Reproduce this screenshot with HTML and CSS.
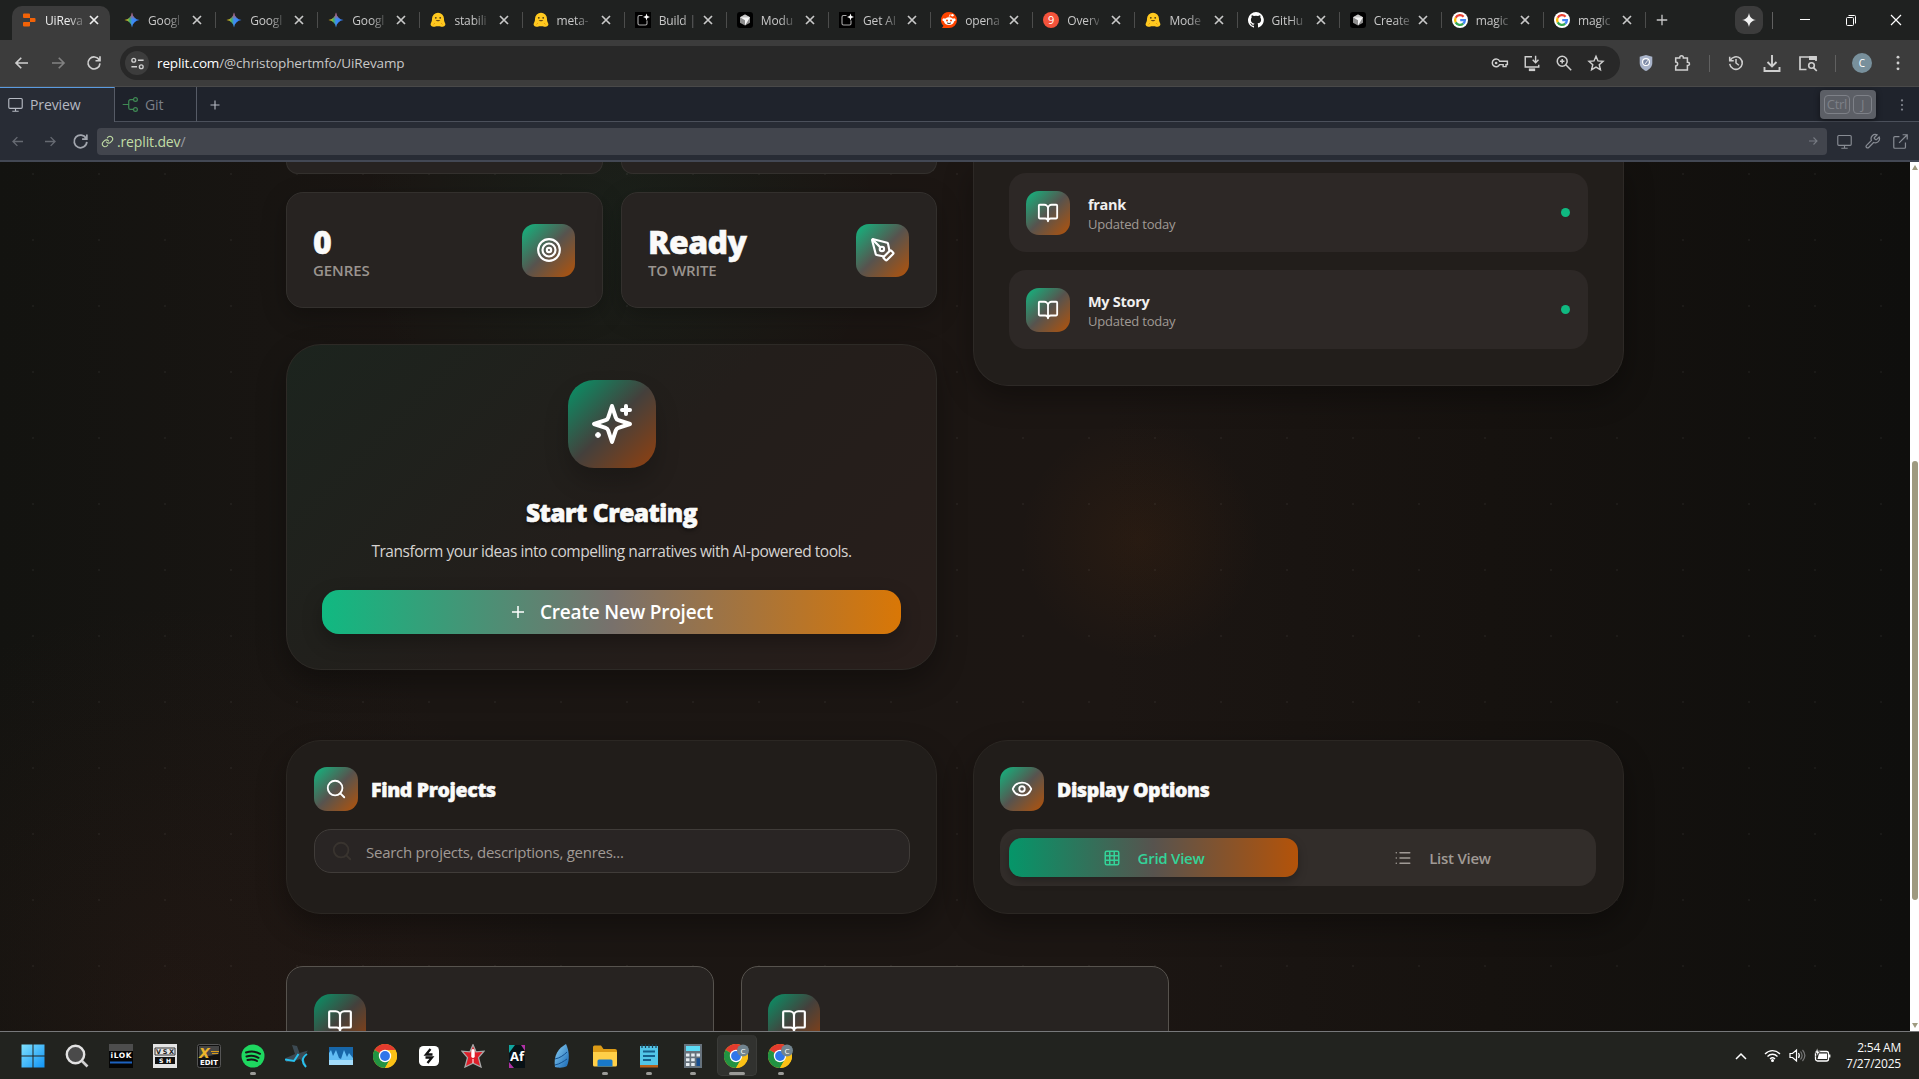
FILE: index.html
```html
<!DOCTYPE html>
<html lang="en">
<head>
<meta charset="utf-8">
<title>UiRevamp - Replit</title>
<link rel="stylesheet" href="styles.css">
</head>
<body>
<svg class="defs" width="0" height="0" aria-hidden="true">
  <defs>
    <linearGradient id="gGem" x1="0" y1="0" x2="1" y2="0"><stop offset="0.1" stop-color="#f6c515"/><stop offset="0.35" stop-color="#3fae6b"/><stop offset="0.5" stop-color="#3f8cf5"/><stop offset="1" stop-color="#2f7bf6"/></linearGradient>
    <linearGradient id="gGemTop" x1="0" y1="0" x2="0" y2="1"><stop offset="0" stop-color="#f04438"/><stop offset="0.45" stop-color="#f04438" stop-opacity="0"/></linearGradient>
    <linearGradient id="gWin" x1="0" y1="0" x2="1" y2="1"><stop offset="0" stop-color="#7fe0fd"/><stop offset="1" stop-color="#1093f5"/></linearGradient>
    <linearGradient id="gFeather" x1="0" y1="0" x2="1" y2="1"><stop offset="0" stop-color="#8fd4f5"/><stop offset="1" stop-color="#1767b5"/></linearGradient>
    <symbol id="close" viewBox="0 0 12 12"><path d="M2 2l8 8M10 2l-8 8" fill="none" stroke="currentColor" stroke-width="1.7"/></symbol>
    <symbol id="fReplit" viewBox="0 0 16 16"><path fill="#f26207" d="M3 1.500h5a1 1 0 0 1 1 1V6H3a1 1 0 0 1-1-1V2.500a1 1 0 0 1 1-1zM9 6h4.500a1 1 0 0 1 1 1v2a1 1 0 0 1-1 1H9zM3 10h6v3.500a1 1 0 0 1-1 1H3a1 1 0 0 1-1-1V11a1 1 0 0 1 1-1z"/></symbol>
    <symbol id="fGem" viewBox="0 0 16 16"><path fill="url(#gGem)" d="M8 .5C8.700 4.800 11.200 7.300 15.500 8 11.200 8.700 8.700 11.200 8 15.500 7.300 11.200 4.800 8.700.5 8 4.800 7.300 7.300 4.800 8 .5z"/><path fill="url(#gGemTop)" d="M8 .5C8.700 4.800 11.200 7.300 15.500 8 11.200 8.700 8.700 11.200 8 15.500 7.300 11.200 4.800 8.700.5 8 4.800 7.300 7.300 4.800 8 .5z"/></symbol>
    <symbol id="fHug" viewBox="0 0 16 16"><path fill="#ffc91f" d="M8 .8a6 6 0 0 1 6 6c0 2 .2 2.600 1.200 4.600.8 1.800-1 3.600-4 3.300-1.500-.5-4.900-.5-6.400 0-3 .3-4.800-1.500-4-3.300C1.800 9.400 2 8.800 2 6.800a6 6 0 0 1 6-6z"/><circle cx="5.800" cy="5.800" r=".9" fill="#4a3b16"/><circle cx="10.200" cy="5.800" r=".9" fill="#4a3b16"/><path d="M5.700 8c1.200 1.800 3.400 1.800 4.600 0z" fill="#6b4a13"/><path d="M3.500 12.500l1.500-1.500M12.500 12.500L11 11" stroke="#e99a14"/></symbol>
    <symbol id="fBuild" viewBox="0 0 16 16"><path d="M0 0h16v16H0z" fill="#000"/><path d="M7.500 3.500H4.500a1.500 1.500 0 0 0-1.500 1.500v6.500A1.500 1.500 0 0 0 4.500 13h6a1.500 1.500 0 0 0 1.500-1.500V8.500" fill="none" stroke="#aaa" stroke-width="1.100"/><path d="M11.500 1.500l.9 2.600 2.600.9-2.600.9-.9 2.600-.9-2.600L8 5l2.600-.9z" fill="#fff"/></symbol>
    <symbol id="fCube" viewBox="0 0 16 16"><rect width="16" height="16" rx="3" fill="#000"/><path d="M8 2.500l5 2.800v5.400l-5 2.800-5-2.800V5.300z" fill="#8d8d8d"/><path d="M8 2.500l5 2.800H3z" fill="#c4c4c4"/><path d="M3 5.300h10L8 13.500V8.200z" fill="#f5f5f5"/></symbol>
    <symbol id="fReddit" viewBox="0 0 16 16"><path d="M8 0a8 8 0 1 1 0 16H1l1.500-2.200A8 8 0 0 1 8 0z" fill="#ff4500"/><ellipse cx="8" cy="9.200" rx="5" ry="3.900" fill="#fff"/><circle cx="2.900" cy="7.700" r="1.500" fill="#fff"/><circle cx="13.100" cy="7.700" r="1.500" fill="#fff"/><circle cx="11.500" cy="3.300" r="1.200" fill="#fff"/><path d="M8 5.500L8.700 2.800l2.800.6" fill="none" stroke="#fff" stroke-width=".7"/><circle cx="6" cy="8.500" r="1" fill="#ff4500"/><circle cx="10" cy="8.500" r="1" fill="#ff4500"/><path d="M6 10.800c1.200.9 2.800.9 4 0" fill="none" stroke="#222" stroke-width=".9"/></symbol>
    <symbol id="fNine" viewBox="0 0 16 16"><circle cx="8" cy="8" r="8" fill="#f4533b"/><text x="8" y="12" font-size="11" text-anchor="middle" fill="#fff" font-family="Open Sans, sans-serif">9</text></symbol>
    <symbol id="fGit" viewBox="0 0 16 16"><path fill="#fff" d="M8 0a8 8 0 0 0-2.500 15.600c.4.100.5-.2.500-.4v-1.500c-2.200.5-2.700-.9-2.700-.9-.4-.9-.9-1.200-.9-1.200-.7-.5.100-.5.100-.5.800.1 1.200.8 1.200.8.700 1.200 1.900.9 2.300.7.100-.5.300-.9.500-1.100-1.800-.2-3.600-.9-3.600-4 0-.9.300-1.600.8-2.100-.1-.2-.4-1 .1-2.100 0 0 .7-.2 2.200.8a7.500 7.500 0 0 1 4 0c1.500-1 2.200-.8 2.200-.8.400 1.100.2 1.900.1 2.100.5.600.8 1.300.8 2.100 0 3.100-1.900 3.700-3.600 3.900.3.300.5.800.5 1.500v2.200c0 .2.100.5.600.4A8 8 0 0 0 8 0z"/></symbol>
    <symbol id="fGoogle" viewBox="0 0 16 16"><circle cx="8" cy="8" r="8" fill="#fff"/><g fill="none" stroke-width="2.300"><path d="M11.600 4.700A4.900 4.900 0 0 0 3.700 5.700" stroke="#ea4335"/><path d="M3.700 5.700a4.900 4.900 0 0 0 0 4.700" stroke="#fbbc05"/><path d="M3.700 10.400a4.900 4.900 0 0 0 7.500 1.300" stroke="#34a853"/><path d="M11.200 11.700A4.900 4.900 0 0 0 12.900 8.200H8.200" stroke="#4285f4"/></g></symbol>
    <symbol id="plus" viewBox="0 0 16 16"><path d="M8 2v12M2 8h12" fill="none" stroke="currentColor" stroke-width="1.500"/></symbol>
    <symbol id="left" viewBox="0 0 24 24"><path d="M20 12H4.500M11 5l-7 7 7 7" fill="none" stroke="currentColor" stroke-width="2.200"/></symbol>
    <symbol id="right" viewBox="0 0 24 24"><path d="M4 12h15.500M13 5l7 7-7 7" fill="none" stroke="currentColor" stroke-width="2.200"/></symbol>
    <symbol id="reload" viewBox="0 0 24 24"><path d="M19 8A8 8 0 1 0 20 12.500M20 3v6h-6" fill="none" stroke="currentColor" stroke-width="2.200"/></symbol>
    <symbol id="tune" viewBox="0 0 16 16"><g fill="none" stroke="currentColor" stroke-width="1.500"><circle cx="4" cy="4.500" r="2"/><path d="M8.500 4.500H14.500M1.500 11.500H7.500"/><circle cx="12" cy="11.500" r="2"/></g></symbol>
    <symbol id="key" viewBox="0 0 20 20"><g fill="none" stroke="currentColor" stroke-width="1.600"><path d="M9.600 8H18.200v3.800h-1.500V14h-3.200v-2.200H9.600A4.300 4.300 0 1 1 9.600 8z"/></g><circle cx="5.700" cy="10" r="1.500" fill="currentColor"/></symbol>
    <symbol id="install" viewBox="0 0 20 20"><g fill="none" stroke="currentColor" stroke-width="1.600"><path d="M10 3H2.500v11.500h15V12M14 2v7.500M10.800 6.500L14 9.700l3.200-3.200"/><path d="M6.500 17.500h7" stroke-width="3"/></g></symbol>
    <symbol id="zoomin" viewBox="0 0 20 20"><g fill="none" stroke="currentColor" stroke-width="1.700"><circle cx="8" cy="8" r="5.500"/><path d="M12 12l6 6M8 5.500v5M5.500 8h5"/></g></symbol>
    <symbol id="star" viewBox="0 0 20 20"><path d="M10 2.500l2.200 5.200 5.600.5-4.200 3.700 1.300 5.500L10 14.500l-4.900 2.900 1.300-5.500L2.200 8.200l5.600-.5z" fill="none" stroke="currentColor" stroke-width="1.600"/></symbol>
    <symbol id="shield" viewBox="0 0 20 20"><path d="M10 1l7 2v7c0 4-3 7-7 9-4-2-7-5-7-9V3z" fill="#a8b3c9"/><circle cx="10" cy="9" r="3.800" fill="#7b88a5" stroke="#fff" stroke-width="1.300"/><path d="M9 11l3-4" stroke="#fff"/></symbol>
    <symbol id="puzzle" viewBox="0 0 20 20"><path d="M3 4.500h4.500V4a2 2 0 0 1 4 0v.5H16v4.700h.5a1.800 1.800 0 0 1 0 3.600H16v5H3v-4.500a2 2 0 0 0 0-4.300z" fill="none" stroke="currentColor" stroke-width="1.700"/></symbol>
    <symbol id="history" viewBox="0 0 20 20"><path d="M3 3v4.500h4.500M3.500 7.300A7 7 0 1 1 3 11M10 5.500V10l3.200 2.500" fill="none" stroke="currentColor" stroke-width="1.700"/></symbol>
    <symbol id="download" viewBox="0 0 20 20"><path d="M10 2v11M5.500 9l4.500 4.500L14.500 9M2.500 14v4h15v-4" fill="none" stroke="currentColor" stroke-width="1.900"/></symbol>
    <symbol id="lens" viewBox="0 0 20 20"><path d="M8.500 16.500H2V4h16v4" fill="none" stroke="currentColor" stroke-width="1.700"/><path d="M11 3h7.800v4H11z" fill="currentColor"/><circle cx="13.500" cy="12.500" r="2.800" fill="none" stroke="currentColor" stroke-width="1.600"/><path d="M15.500 14.700l3.300 3.300" stroke="currentColor" stroke-width="1.700"/></symbol>
    <symbol id="dots" viewBox="0 0 20 20"><g fill="currentColor"><circle cx="10" cy="3.500" r="1.600"/><circle cx="10" cy="10" r="1.600"/><circle cx="10" cy="16.500" r="1.600"/></g></symbol>
    <symbol id="monitor" viewBox="0 0 24 24"><path d="M4 3.500h16a1.500 1.500 0 0 1 1.500 1.500v11a1.500 1.500 0 0 1-1.500 1.500H4A1.500 1.500 0 0 1 2.500 16V5A1.500 1.500 0 0 1 4 3.500zM12 17.500V21.500M7.500 21.500h9" fill="none" stroke="currentColor" stroke-width="1.600"/></symbol>
    <symbol id="branch" viewBox="0 0 24 24"><g fill="none" stroke="currentColor" stroke-width="1.700"><circle cx="19" cy="5" r="2.700"/><circle cx="19" cy="19" r="2.700"/><path d="M1 12h8.500M16.300 5H12a2.500 2.500 0 0 0-2.500 2.500v9A2.500 2.500 0 0 0 12 19h4.300"/></g></symbol>
    <symbol id="link" viewBox="0 0 24 24"><path d="M10 13a5 5 0 0 0 7.500.5l3-3a5 5 0 0 0-7-7l-1.800 1.700M14 11a5 5 0 0 0-7.500-.5l-3 3a5 5 0 0 0 7 7l1.700-1.700" fill="none" stroke="currentColor" stroke-width="2" stroke-linecap="round"/></symbol>
    <symbol id="wrench" viewBox="0 0 24 24"><path d="M14.700 6.300a1 1 0 0 0 0 1.400l1.600 1.600a1 1 0 0 0 1.400 0l3.700-3.700a6 6 0 0 1-7.900 7.900l-6.900 6.900a2.100 2.100 0 0 1-3-3l6.900-6.900a6 6 0 0 1 7.900-7.900z" fill="none" stroke="currentColor" stroke-width="1.700"/></symbol>
    <symbol id="external" viewBox="0 0 24 24"><path d="M19 13.500V20a1.500 1.500 0 0 1-1.500 1.500H4A1.500 1.500 0 0 1 2.500 20V6.500A1.500 1.500 0 0 1 4 5h6.500M15 2.500h6.500V9M10 14L21.500 2.500" fill="none" stroke="currentColor" stroke-width="1.700"/></symbol>
    <symbol id="target" viewBox="0 0 24 24"><g fill="none" stroke="currentColor" stroke-width="2"><circle cx="12" cy="12" r="10"/><circle cx="12" cy="12" r="6"/><circle cx="12" cy="12" r="2"/></g></symbol>
    <symbol id="pen" viewBox="0 0 24 24"><g fill="none" stroke="currentColor" stroke-width="2" stroke-linecap="round" stroke-linejoin="round"><path d="M15.707 21.293a1 1 0 0 1-1.414 0l-1.586-1.586a1 1 0 0 1 0-1.414l5.586-5.586a1 1 0 0 1 1.414 0l1.586 1.586a1 1 0 0 1 0 1.414z"/><path d="m18 13-1.375-6.874a1 1 0 0 0-.746-.776L3.235 2.028a1 1 0 0 0-1.207 1.207L5.350 15.879a1 1 0 0 0 .776.746L13 18"/><path d="m2.300 2.300 7.286 7.286"/><circle cx="11" cy="11" r="2"/></g></symbol>
    <symbol id="sparkles" viewBox="0 0 24 24"><g fill="none" stroke="currentColor" stroke-width="2" stroke-linecap="round" stroke-linejoin="round"><path d="m12 3-1.912 5.813a2 2 0 0 1-1.275 1.275L3 12l5.813 1.912a2 2 0 0 1 1.275 1.275L12 21l1.912-5.813a2 2 0 0 1 1.275-1.275L21 12l-5.813-1.912a2 2 0 0 1-1.275-1.275L12 3z"/><path d="M19 3v4M21 5h-4M5 17v1M5.500 17.500h-1"/></g></symbol>
    <symbol id="book" viewBox="0 0 24 24"><path d="M12 7v14M3 18a1 1 0 0 1-1-1V4a1 1 0 0 1 1-1h5a4 4 0 0 1 4 4 4 4 0 0 1 4-4h5a1 1 0 0 1 1 1v13a1 1 0 0 1-1 1h-6a3 3 0 0 0-3 3 3 3 0 0 0-3-3z" fill="none" stroke="currentColor" stroke-width="2" stroke-linejoin="round" stroke-linecap="round"/></symbol>
    <symbol id="search" viewBox="0 0 24 24"><g fill="none" stroke="currentColor" stroke-width="2" stroke-linecap="round"><circle cx="11" cy="11" r="8"/><path d="m21 21-4.300-4.300"/></g></symbol>
    <symbol id="eye" viewBox="0 0 24 24"><g fill="none" stroke="currentColor" stroke-width="2" stroke-linejoin="round"><path d="M2.062 12.348a1 1 0 0 1 0-.696 10.750 10.750 0 0 1 19.876 0 1 1 0 0 1 0 .696 10.750 10.750 0 0 1-19.876 0"/><circle cx="12" cy="12" r="3"/></g></symbol>
    <symbol id="grid" viewBox="0 0 24 24"><g fill="none" stroke="currentColor" stroke-width="2"><rect x="3" y="3" width="18" height="18" rx="2"/><path d="M3 9h18M3 15h18M9 3v18M15 3v18"/></g></symbol>
    <symbol id="list" viewBox="0 0 24 24"><path d="M8 5h13M8 12h13M8 19h13M3 5h.1M3 12h.1M3 19h.1" fill="none" stroke="currentColor" stroke-width="2" stroke-linecap="round"/></symbol>
    <symbol id="chrome" viewBox="0 0 24 24"><circle cx="12" cy="12" r="12" fill="#fbc116"/><path d="M12 12L1.600 6a12 12 0 0 1 20.800 0z" fill="#e33b2e"/><path d="M12 12L1.600 6A12 12 0 0 0 12 24l5.200-9z" fill="#229342"/><path d="M12 6h10.400A12 12 0 0 1 12 24l5.200-9z" fill="#fbc116"/><circle cx="12" cy="12" r="6.200" fill="#fff"/><circle cx="12" cy="12" r="4.900" fill="#2f76ea"/></symbol>
    <symbol id="chromeUser" viewBox="0 0 26 24"><use href="#chrome" width="24" height="24"/><circle cx="19" cy="6.500" r="6" fill="#71848f"/><text x="19" y="9.500" font-size="8" text-anchor="middle" fill="#fff" font-family="Open Sans, sans-serif">C</text></symbol>
  </defs>
</svg>

<header class="tabstrip">
  <div class="tabs">
    <div class="tab active"><svg class="fav"><use href="#fReplit"/></svg><span>UiReva</span><svg class="x"><use href="#close"/></svg></div>
    <div class="tab"><svg class="fav"><use href="#fGem"/></svg><span>Googl</span><svg class="x"><use href="#close"/></svg></div>
    <div class="tab"><svg class="fav"><use href="#fGem"/></svg><span>Googl</span><svg class="x"><use href="#close"/></svg></div>
    <div class="tab"><svg class="fav"><use href="#fGem"/></svg><span>Googl</span><svg class="x"><use href="#close"/></svg></div>
    <div class="tab"><svg class="fav"><use href="#fHug"/></svg><span>stabili</span><svg class="x"><use href="#close"/></svg></div>
    <div class="tab"><svg class="fav"><use href="#fHug"/></svg><span>meta-</span><svg class="x"><use href="#close"/></svg></div>
    <div class="tab"><svg class="fav"><use href="#fBuild"/></svg><span>Build |</span><svg class="x"><use href="#close"/></svg></div>
    <div class="tab"><svg class="fav"><use href="#fCube"/></svg><span>Modu</span><svg class="x"><use href="#close"/></svg></div>
    <div class="tab"><svg class="fav"><use href="#fBuild"/></svg><span>Get AI</span><svg class="x"><use href="#close"/></svg></div>
    <div class="tab"><svg class="fav"><use href="#fReddit"/></svg><span>opena</span><svg class="x"><use href="#close"/></svg></div>
    <div class="tab"><svg class="fav"><use href="#fNine"/></svg><span>Overv</span><svg class="x"><use href="#close"/></svg></div>
    <div class="tab"><svg class="fav"><use href="#fHug"/></svg><span>Mode</span><svg class="x"><use href="#close"/></svg></div>
    <div class="tab"><svg class="fav"><use href="#fGit"/></svg><span>GitHu</span><svg class="x"><use href="#close"/></svg></div>
    <div class="tab"><svg class="fav"><use href="#fCube"/></svg><span>Create</span><svg class="x"><use href="#close"/></svg></div>
    <div class="tab"><svg class="fav"><use href="#fGoogle"/></svg><span>magic</span><svg class="x"><use href="#close"/></svg></div>
    <div class="tab"><svg class="fav"><use href="#fGoogle"/></svg><span>magic</span><svg class="x"><use href="#close"/></svg></div>
  </div>
  <svg class="newtab"><use href="#plus"/></svg>
  <div class="window-controls">
    <div class="gem-btn"><svg width="14" height="14" viewBox="0 0 16 16"><path fill="#f2f2f2" d="M8 0c1 5 3 7 8 8-5 1-7 3-8 8-1-5-3-7-8-8 5-1 7-3 8-8z"/></svg></div>
    <i class="tick"></i>
    <svg width="46" height="20" viewBox="0 0 46 20"><path d="M18 9.500h10" stroke="#fff"/></svg>
    <svg width="46" height="20" viewBox="0 0 46 20"><g fill="none" stroke="#fff"><rect x="18.500" y="7.500" width="7" height="8" rx="1"/><path d="M20.500 5.500h6a1 1 0 0 1 1 1v7"/></g></svg>
    <svg width="45" height="20" viewBox="0 0 45 20"><path d="M17 5l10 10M27 5L17 15" stroke="#fff" stroke-width="1.200"/></svg>
  </div>
</header>

<div class="toolbar">
  <svg class="nav"><use href="#left"/></svg>
  <svg class="nav dim"><use href="#right"/></svg>
  <svg class="nav"><use href="#reload"/></svg>
  <div class="omnibox">
    <div class="chip"><svg width="15" height="15"><use href="#tune"/></svg></div>
    <div class="url"><b>replit.com</b>/@christophertmfo/UiRevamp</div>
    <svg class="oi"><use href="#key"/></svg>
    <svg class="oi"><use href="#install"/></svg>
    <svg class="oi"><use href="#zoomin"/></svg>
    <svg class="oi"><use href="#star"/></svg>
  </div>
  <div class="actions">
    <svg class="ai"><use href="#shield"/></svg>
    <svg class="ai"><use href="#puzzle"/></svg>
    <i class="tick"></i>
    <svg class="ai"><use href="#history"/></svg>
    <svg class="ai big"><use href="#download"/></svg>
    <svg class="ai big"><use href="#lens"/></svg>
    <i class="tick"></i>
    <div class="avatar-slot"><span class="avatar">C</span></div>
    <svg class="ai"><use href="#dots"/></svg>
  </div>
</div>

<div class="pane-tabs">
  <div class="pane-tab current"><svg><use href="#monitor"/></svg><span>Preview</span></div>
  <div class="pane-tab git"><svg><use href="#branch"/></svg><span>Git</span></div>
  <svg class="pane-add"><use href="#plus"/></svg>
  <div class="shortcut"><kbd>Ctrl</kbd><kbd>J</kbd></div>
  <svg class="pane-menu"><use href="#dots"/></svg>
</div>

<div class="preview-bar">
  <svg class="pv faint"><use href="#left"/></svg>
  <svg class="pv faint"><use href="#right"/></svg>
  <svg class="pv reload"><use href="#reload"/></svg>
  <div class="preview-url"><svg class="lk"><use href="#link"/></svg><span>.replit.dev<em>/</em></span><svg class="go"><use href="#right"/></svg></div>
  <svg class="pa"><use href="#monitor"/></svg>
  <svg class="pa"><use href="#wrench"/></svg>
  <svg class="pa"><use href="#external"/></svg>
</div>

<div class="viewport">
  <main class="page">
    <section class="columns overview">
      <div class="stack">
        <div class="stats">
          <div class="stub"></div><div class="stub"></div>
          <article class="stat"><div><strong>0</strong><small>GENRES</small></div><div class="badge lg"><svg width="26" height="26"><use href="#target"/></svg></div></article>
          <article class="stat"><div><strong>Ready</strong><small>TO WRITE</small></div><div class="badge lg"><svg width="26" height="26"><use href="#pen"/></svg></div></article>
        </div>
        <article class="create">
          <div class="badge xl"><svg width="48" height="48"><use href="#sparkles"/></svg></div>
          <h2>Start Creating</h2>
          <p>Transform your ideas into compelling narratives with AI-powered tools.</p>
          <button><svg width="16" height="16"><use href="#plus"/></svg><span>Create New Project</span></button>
        </article>
      </div>
      <article class="recent">
        <div class="item"><div class="badge"><svg width="22" height="22"><use href="#book"/></svg></div><div class="meta"><b>frank</b><span>Updated today</span></div><i class="dot"></i></div>
        <div class="item"><div class="badge"><svg width="22" height="22"><use href="#book"/></svg></div><div class="meta"><b>My Story</b><span>Updated today</span></div><i class="dot"></i></div>
      </article>
    </section>
    <section class="columns filters">
      <article class="panel find">
        <header><div class="badge"><svg width="22" height="22"><use href="#search"/></svg></div><h3>Find Projects</h3></header>
        <div class="field"><svg width="22" height="22"><use href="#search"/></svg><span>Search projects, descriptions, genres...</span></div>
      </article>
      <article class="panel">
        <header><div class="badge"><svg width="22" height="22"><use href="#eye"/></svg></div><h3>Display Options</h3></header>
        <div class="segmented">
          <div class="seg on"><svg width="18" height="18"><use href="#grid"/></svg><span>Grid View</span></div>
          <div class="seg"><svg width="18" height="18"><use href="#list"/></svg><span>List View</span></div>
        </div>
      </article>
    </section>
    <section class="projects">
      <article><div class="badge deep"><svg width="26" height="26"><use href="#book"/></svg></div></article>
      <article><div class="badge deep"><svg width="26" height="26"><use href="#book"/></svg></div></article>
    </section>
  </main>
  <div class="scrollbar"><i class="up"></i><i class="thumb"></i><i class="down"></i></div>
</div>

<footer class="taskbar">
  <div class="apps">
    <div class="app"><svg viewBox="0 0 24 24"><path fill="url(#gWin)" d="M.5.5h11v11H.5zM12.500.5h11v11h-11zM.5 12.500h11v11H.5zM12.500 12.500h11v11h-11z"/></svg></div>
    <div class="app"><svg viewBox="0 0 24 24"><circle cx="10.500" cy="10.500" r="8.700" fill="#4a4a4a" stroke="#e2e2e2" stroke-width="2.400"/><path d="M17 17l5.500 5.500" stroke="#d0d0d0" stroke-width="2.600"/></svg></div>
    <div class="app"><svg viewBox="0 0 24 24"><path d="M0 0h24v24H0z" fill="#050505"/><path d="M0 0h24v7H0z" fill="#4d4d4d"/><path d="M1 18.500h22" stroke="#1d62c0" stroke-width="2"/><text x="12" y="13.500" font-size="7.500" font-weight="700" text-anchor="middle" fill="#fff" font-family="DejaVu Sans, sans-serif" textLength="21">iLOK</text></svg></div>
    <div class="app"><svg viewBox="0 0 24 24"><path d="M0 0h24v24H0z" fill="#e4e4e4"/><path d="M2 13h20v7H2z" fill="#111"/><path d="M2 4h20v7H2z" fill="none" stroke="#333"/><text x="12" y="10" font-size="6.500" font-weight="700" text-anchor="middle" fill="#222" font-family="DejaVu Sans, sans-serif" textLength="18">VSX</text><text x="12" y="18.800" font-size="6" font-weight="700" text-anchor="middle" fill="#fff" font-family="DejaVu Sans, sans-serif" textLength="12">SH</text></svg></div>
    <div class="app"><svg viewBox="0 0 24 24"><rect x=".5" y=".5" width="23" height="23" rx="2" fill="#111" stroke="#555"/><path d="M2 2h20v8L2 14z" fill="#454545"/><text x="2" y="14" font-size="14" font-style="italic" font-weight="700" fill="#eab32b" font-family="DejaVu Sans, sans-serif">X</text><path d="M14 7.500h8M15 9.500h6" stroke="#d79c1a"/><text x="12" y="21" font-size="7" font-weight="700" text-anchor="middle" fill="#fff" font-family="DejaVu Sans, sans-serif" textLength="18">EDIT</text></svg></div>
    <div class="app run"><svg viewBox="0 0 24 24"><circle cx="12" cy="12" r="11.500" fill="#1ed760"/><path d="M5 8.500c5-1.500 10-1 14 1.300M5.500 12.500c4.500-1.200 8.500-.7 12 1.300M6.500 16c3.500-1 7-.5 9.500 1" fill="none" stroke="#161616" stroke-width="2" stroke-linecap="round"/></svg></div>
    <div class="app"><svg viewBox="0 0 24 24"><path d="M7 1l5 1 2.500 7L23 6.500l-5 6.500 4 10c-3-2-5-6-7-8L9 17l-8 1v-4l9-4z" fill="#3c4a53"/><path d="M0 15.500l9 1.500 4.500-7" fill="none" stroke="#28c2ef" stroke-width="2"/><path d="M22 10c-6 4-5 9-1 13" fill="none" stroke="#28c2ef" stroke-width="2"/></svg></div>
    <div class="app"><svg viewBox="0 0 24 24"><path d="M0 3h24v18H0z" fill="#1766a8"/><path d="M0 9l2-3 2 6 3-6 3 8 2 1 3-9 3 7 2-4 4 5v7H0z" fill="#62bdf4"/><path d="M0 16h24v5H0z" fill="#a4dcfa"/></svg></div>
    <div class="app"><svg><use href="#chrome"/></svg></div>
    <div class="app"><svg viewBox="0 0 24 24"><rect x="2" y="2" width="20" height="20" rx="4.500" fill="#fff"/><path d="M13.500 5L9 10.500h6.500M10.500 19L15 13.500H8.500" fill="none" stroke="#111" stroke-width="2.300"/></svg></div>
    <div class="app"><svg viewBox="0 0 24 24"><path d="M12 .8l3 7 8-.6-5.500 6.500L20 23l-8-3.800L4 23l2.500-9.300L1 7.200l8 .6z" fill="#de1f2a" stroke="#a8a8a8" stroke-width="1.300"/><rect x="10.300" y="5" width="3.400" height="9" rx="1.700" fill="#fff"/><path d="M12 15v4" stroke="#fff"/></svg></div>
    <div class="app"><svg viewBox="0 0 24 24"><path d="M4 1h16v23H4z" fill="#081116"/><path d="M4 18l5 6H4zM16 1l4 6V1z" fill="#b132a5"/><path d="M4 1h6L4 9z" fill="#11a59f"/><text x="12" y="17" font-size="13" font-weight="700" text-anchor="middle" fill="#fff" font-family="Open Sans, sans-serif">Af</text></svg></div>
    <div class="app"><svg viewBox="0 0 24 24"><path d="M17 0c-7 4-13 11-11 23 3 1 9 1 12-1 3-7 2-16-1-22z" fill="url(#gFeather)"/><path d="M6 15c5-1 9-4 12-7M6 21c5-1 9-4 12-6" fill="none" stroke="#12508f"/></svg></div>
    <div class="app run"><svg viewBox="0 0 24 24"><path d="M0 3a1.500 1.500 0 0 1 1.500-1.500H8L10.500 5H22a2 2 0 0 1 2 2v3H0z" fill="#dd9b16"/><path d="M0 8h24v13a1.500 1.500 0 0 1-1.500 1.500h-21A1.500 1.500 0 0 1 0 21z" fill="#ffcf48"/><path d="M4.500 22.500V17a1.500 1.500 0 0 1 1.500-1.500h12a1.500 1.500 0 0 1 1.500 1.500v5.500z" fill="#1878c8"/></svg></div>
    <div class="app run"><svg viewBox="0 0 24 24"><path d="M3 2h18v19H3z" fill="#52c5e8"/><path d="M3 21h18v2.500H3z" fill="#b8611c"/><path d="M6 7.500h12M6 12h12M6 16h8" stroke="#155e8b" stroke-width="2"/><path d="M5 0v4M8.500 0v4M12 0v4M15.500 0v4M19 0v4" stroke="#1c3e50" stroke-width="1.200"/></svg></div>
    <div class="app run"><svg viewBox="0 0 24 24"><path d="M3 0h18v24H3z" fill="#66727c"/><path d="M5 2h14v5H5z" fill="#5ddcf7"/><path d="M5 9.500h3.500v3H5zM10.200 9.500h3.500v3h-3.500zM15.500 9.500H19v3h-3.500zM5 14.200h3.500v3H5zM10.200 14.200h3.500v3h-3.500zM5 19h3.500v3H5zM10.200 19h3.500v3h-3.500z" fill="#e6edf2"/><path d="M15.500 14.200H19V22h-3.500z" fill="#174f91"/></svg></div>
    <div class="app run focus"><svg class="wide"><use href="#chromeUser"/></svg></div>
    <div class="app run"><svg class="wide"><use href="#chromeUser"/></svg></div>
  </div>
  <div class="tray">
    <svg width="12" height="12" viewBox="0 0 12 12"><path d="M1 9l5-5 5 5" fill="none" stroke="#fff" stroke-width="1.500"/></svg>
    <svg class="wifi" width="17" height="15" viewBox="0 0 17 15"><g fill="none" stroke="#fff" stroke-width="1.300"><path d="M1 6c4.500-4.500 10.500-4.500 15 0M3.500 8.500c3-3 7-3 10 0M6 11c1.500-1.500 3.500-1.500 5 0"/></g><circle cx="8.500" cy="12.500" r="1.500" fill="#fff"/></svg>
    <svg width="17" height="15" viewBox="0 0 17 15"><g fill="none" stroke="#fff" stroke-width="1.200"><path d="M1 5.500h2.500L7.500 2v11L3.500 9.500H1zM9.500 5c1 1.500 1 3.500 0 5"/><path d="M11.500 3.500c2 2.500 2 5.500 0 8M13.500 2c3 3.500 3 7.500 0 11" stroke="#777"/></g></svg>
    <svg class="batt" width="17" height="15" viewBox="0 0 17 15"><rect x="1.500" y="3.500" width="13" height="9.500" rx="2" fill="none" stroke="#fff" stroke-width="1.300"/><path d="M5 5.500h8v5.500H3.500z" fill="#fff"/><path d="M15.500 6.500v3" stroke="#fff" stroke-width="1.800"/><path d="M3.500 0L1 5h2L2 9l4-5.500H4z" fill="#fff" stroke="#22231f" stroke-width=".5"/></svg>
    <div class="clock"><span>2:54 AM</span><span>7/27/2025</span></div>
  </div>
</footer>
</body>
</html>
```
FILE: styles.css
```css
* { box-sizing: border-box; }
body {
  margin: 0;
  width: 1919px;
  height: 1079px;
  overflow: hidden;
  display: flex;
  flex-direction: column;
  background: #16120f;
  color: #fafaf9;
  font-family: "Open Sans", "Noto Sans", sans-serif;
  font-size: 16px;
}
svg { flex: none; display: block; }
.defs { position: absolute; }
h2, h3, p { margin: 0; }

/* Browser tab strip */
.tabstrip { height: 40px; flex: none; display: flex; align-items: center; padding-left: 10px; background: #1f2120; }
.tabs { display: flex; height: 40px; align-items: flex-end; width: 1635px; }
.tab { position: relative; flex: 1; min-width: 0; height: 34px; padding: 0 12px 0 11px; display: flex; align-items: center; color: #c8c8c8; font-size: 12px; letter-spacing: -.15px; }
.tab::after { content: ""; position: absolute; right: -1px; top: 6px; width: 1px; height: 16px; background: #4c4d4c; }
.tab.active::after { width: 0; }
.tab.active { background: #3c3c3c; border-radius: 10px 10px 0 0; color: #eee; margin-left: 2px; padding: 0 10px 0 9px; flex: none; width: 98px; margin-right: 3px; }
.tab .fav { width: 16px; height: 16px; margin-top: -6px; }
.tab span { margin: -5px auto 0 8px; white-space: nowrap; -webkit-mask: linear-gradient(90deg, #000 60%, #0004); mask: linear-gradient(90deg, #000 60%, #0004); }
.tab .x { width: 12px; height: 12px; margin-top: -6px; }
.newtab { width: 14px; height: 14px; margin-left: 10px; color: #c8c8c8; }
.window-controls { margin-left: auto; display: flex; align-items: center; }
.gem-btn { width: 28px; height: 28px; border-radius: 9px; background: #3c3c3c; display: grid; place-items: center; }
.tick { flex: none; width: 17px; height: 17px; background: linear-gradient(#606060, #606060) center / 1px 100% no-repeat; }
.window-controls .tick { width: 19px; }

/* Address bar */
.toolbar { height: 47px; flex: none; display: flex; align-items: center; padding-left: 4px; background: #3c3c3c; border-bottom: 1px solid #494949; color: #cfcfcf; }
.nav { width: 36px; height: 18px; margin-top: -1px; }
.nav.dim { color: #828282; }
.omnibox { width: 1500px; height: 34px; margin-left: 8px; padding: 0 8px 0 5px; border-radius: 17px; background: #282828; display: flex; align-items: center; }
.chip { width: 24px; height: 24px; border-radius: 50%; background: #3c3c3c; display: grid; place-items: center; }
.url { margin: 0 auto 0 8px; font-size: 13.500px; letter-spacing: -.14px; color: #c7c7c7; }
.url b { font-weight: 400; color: #fff; }
.oi { width: 32px; height: 18px; }
.actions { display: flex; align-items: center; margin-left: 8px; }
.ai { width: 36px; height: 18px; }
.ai.big { height: 20px; }
.actions .tick { width: 18px; }
.avatar-slot { width: 36px; display: grid; place-items: center; }
.avatar { width: 20px; height: 20px; border-radius: 50%; background: #78909c; color: #fff; font-size: 10px; line-height: 20px; text-align: center; }

/* Workspace pane tabs */
.pane-tabs { height: 35px; flex: none; display: flex; align-items: center; background: linear-gradient(#4b505b, #4b505b) right 0 bottom 0 / 1805px 1px no-repeat #1f232c; }
.pane-tab { height: 35px; display: flex; align-items: center; gap: 6px; font-size: 14px; letter-spacing: -.1px; padding: 0 0 1px 7px; border-right: 1px solid #565b66; }
.pane-tab svg { width: 17px; height: 17px; }
.pane-tab.current { width: 115px; background: #282c35; border-top: 1px solid #5a9be0; color: #b5b9c2; }
.pane-tab.git { width: 82px; color: #7b7f88; background: #1e222b; border-bottom: 1px solid #4b505b; padding-bottom: 0; }
.pane-tab.git svg { color: #3f8a54; }
.pane-add { width: 12px; height: 12px; margin-left: 12px; color: #b5b9c2; }
.shortcut { margin-left: auto; width: 56px; height: 29px; border-radius: 4px; background: #5c5f66; display: flex; align-items: center; justify-content: center; gap: 3px; box-shadow: 0 2px 6px #0007; }
kbd { height: 19px; padding: 0 2px; border: 1px solid #7e8188; border-radius: 4px; font: 13px/17px "Open Sans", sans-serif; color: #7e8188; letter-spacing: -.3px; }
kbd + kbd { padding: 0 7px; }
.pane-menu { width: 16px; height: 14px; margin: 0 9px 0 18px; color: #838790; }
.preview-bar { height: 40px; flex: none; display: flex; align-items: center; padding-left: 2px; background: #282c35; border-bottom: 2px solid #434854; color: #888c94; }
.pv { width: 34px; height: 15px; }
.pv.faint { color: #666a72; width: 32px; }
.pv.reload { color: #a2a6ae; height: 19px; width: 29px; margin-right: 2px; }
.preview-url { width: 1730px; height: 27px; border-radius: 4px; background: #42454d; display: flex; align-items: center; padding: 0 8px 0 4px; font-size: 14px; letter-spacing: -.14px; color: #c1dda5; }
.preview-url em { font-style: normal; color: #989ca3; }
.lk { width: 13px; height: 13px; margin-right: 3px; }
.go { width: 12px; height: 12px; margin-left: auto; color: #777b83; }
.pa { width: 17px; height: 17px; margin-left: 11px; }
.preview-url + .pa { margin-left: 9px; }

/* Scrolled page */
.viewport { flex: 1; min-height: 0; display: flex; overflow: hidden; }
.page {
  width: 1910px;
  padding-left: 286px;
  background:
    radial-gradient(circle at 33px 8px, #ffffff0b 0, #ffffff0b .8px, transparent 1.200px) 0 4px / 66px 66px,
    radial-gradient(circle 120px at 1140px 378px, #b4530915, transparent),
    radial-gradient(circle 260px at 620px 60px, #10b98110, transparent),
    radial-gradient(circle 400px at 170px 840px, #7a302018, transparent),
    linear-gradient(90deg, #131310 0, #1b1613 22%, #1c1613 58%, #16120f 78%, #0f0f0d);
}
.columns { display: grid; grid-template-columns: 651px 651px; column-gap: 36px; align-items: start; }
.stats { display: grid; grid-template-columns: 317px 316px; gap: 18px; }
.stub { height: 12px; background: #272321; border: 1px solid #33302d; border-top: 0; border-radius: 0 0 16px 16px; }
.stat { height: 116px; padding: 0 27px 0 26px; display: flex; align-items: center; justify-content: space-between; border: 1px solid #33302d; border-radius: 17px; background: #272321; box-shadow: 0 8px 24px #0004; }
.stat strong { display: block; font-weight: 800; font-size: 32px; line-height: 35px; letter-spacing: -.6px; margin-top: 4px; -webkit-text-stroke: .5px; }
.stat small { display: block; font-size: 15px; line-height: 22px; font-weight: 600; letter-spacing: -.1px; color: #9a948f; }
.badge { flex: none; width: 44px; height: 44px; border-radius: 13px; display: grid; place-items: center; color: #fff; background: linear-gradient(135deg, #10b981, #57534e 50%, #b45309); }
.badge.lg { width: 53px; height: 53px; }
.badge.xl { width: 88px; height: 88px; border-radius: 26px; background: linear-gradient(135deg, #059669, #44403c 50%, #92400e); box-shadow: 0 14px 24px #0003; }
.badge.deep { width: 52px; height: 53px; border-radius: 17px; background: linear-gradient(135deg, #059669, #44403c 50%, #92400e); }
.create { height: 326px; margin-top: 36px; padding: 35px; display: flex; flex-direction: column; align-items: center; border: 1px solid #2d2a26; border-radius: 35px; background: linear-gradient(135deg, #1c241e, #231e1b 50%, #281e1b); box-shadow: 0 12px 30px #0005; }
.create h2 { margin-top: 26px; font-size: 24.500px; line-height: 38px; font-weight: 800; letter-spacing: -.5px; -webkit-text-stroke: .6px; text-shadow: 0 2px 4px #0008; }
.create p { margin-top: 8px; font-size: 15.500px; line-height: 22px; letter-spacing: -.46px; color: #d6d3d1; white-space: nowrap; }
.create button { margin-top: 28px; width: 579px; height: 44px; flex: none; border: 0; border-radius: 17px; display: flex; align-items: center; justify-content: center; gap: 14px; font: 600 19px "Open Sans", sans-serif; letter-spacing: -.2px; color: #fff; background: linear-gradient(90deg, #10b981, #78716c 50%, #d97706); box-shadow: 0 8px 20px #0004; }
.recent { height: 224px; padding: 11px 35px 0; border: 1px solid #2d2926; border-top: 0; border-radius: 0 0 35px 35px; background: #221e1b; box-shadow: 0 12px 30px #0005; display: flex; flex-direction: column; gap: 18px; }
.item { height: 79px; border-radius: 17px; background: #2d2826; display: flex; align-items: center; padding: 0 18px 0 17px; }
.meta { margin: 4px 0 0 18px; display: flex; flex-direction: column; }
.meta b { font-weight: 700; font-size: 14.500px; line-height: 20px; letter-spacing: -.3px; color: #f0efee; }
.meta span { font-size: 13px; line-height: 19px; letter-spacing: -.2px; color: #a09a95; }
.dot { width: 9px; height: 9px; border-radius: 50%; background: #10b981; margin-left: auto; }
.filters { margin-top: 70px; }
.panel { height: 174px; padding: 26px; border: 1px solid #2b2723; border-radius: 35px; background: #211d1a; box-shadow: 0 12px 30px #0005; }
.panel.find { padding-left: 27px; }
.panel header { display: flex; gap: 13px; align-items: center; }
.panel h3 { font-size: 19.500px; line-height: 28px; font-weight: 800; letter-spacing: -.35px; -webkit-text-stroke: .5px; margin-top: 2px; }
.field { margin-top: 18px; height: 44px; border: 1px solid #403c39; border-radius: 17px; background: #292524; display: flex; align-items: center; gap: 13px; padding-left: 16px; font-size: 15px; letter-spacing: -.26px; color: #a09a95; }
.field svg { color: #39342f; }
.field span { margin-top: 2px; }
.segmented { margin: 18px 1px 0 0; height: 57px; border-radius: 17px; background: #322d2a; padding: 9px; display: grid; grid-template-columns: 1fr 1fr; }
.seg { display: flex; align-items: center; justify-content: center; gap: 17px; font-size: 15px; font-weight: 600; letter-spacing: -.25px; color: #a09a95; border-radius: 13px; height: 39px; }
.seg.on { color: #34d399; background: linear-gradient(90deg, #059669, #57534e 50%, #b45309); box-shadow: 0 4px 10px #0004; }
.projects { margin-top: 52px; display: grid; grid-template-columns: 428px 428px; gap: 27px; }
.projects article { height: 200px; padding: 27px; border: 1px solid #57534e; border-radius: 17px; background: #272321; }
.projects article + article { padding-left: 26px; }
.scrollbar { width: 9px; background: #fff; display: flex; flex-direction: column; align-items: center; }
.scrollbar .thumb { width: 6px; height: 439px; margin: 291px 0 auto 1px; border-radius: 3px; background: #9f9a80; }
.up, .down { border: 3px solid transparent; }
.up { border-bottom: 5px solid #9f9a80; }
.down { border-top: 5px solid #9f9a80; }

/* Desktop taskbar */
.taskbar { height: 48px; flex: none; display: flex; background: #22231f; border-top: 1px solid #77787a; }
.apps { display: flex; padding-left: 10.500px; }
.app { width: 44.050px; height: 47px; display: flex; flex-direction: column; align-items: center; padding-top: 12px; }
.app svg { width: 24px; height: 24px; }
.app svg.wide { width: 26px; }
.app.run::after { content: ""; width: 6px; height: 3px; margin-top: 4px; border-radius: 2px; background: #9b9b98; }
.app.focus { width: 40px; height: 41px; margin: 3px 2px; padding-top: 9px; border-radius: 5px; background: #31322f; border: 1px solid #3b3c39; border-top: 0; }
.app.focus::after { width: 16px; }
.tray { margin-left: auto; padding-right: 18px; display: flex; align-items: center; }
.wifi { margin-left: 17px; }
.tray svg + svg + svg { margin-left: 8px; }
.clock { width: 70px; display: flex; flex-direction: column; text-align: right; font-size: 12px; line-height: 16px; letter-spacing: -.2px; }
```
